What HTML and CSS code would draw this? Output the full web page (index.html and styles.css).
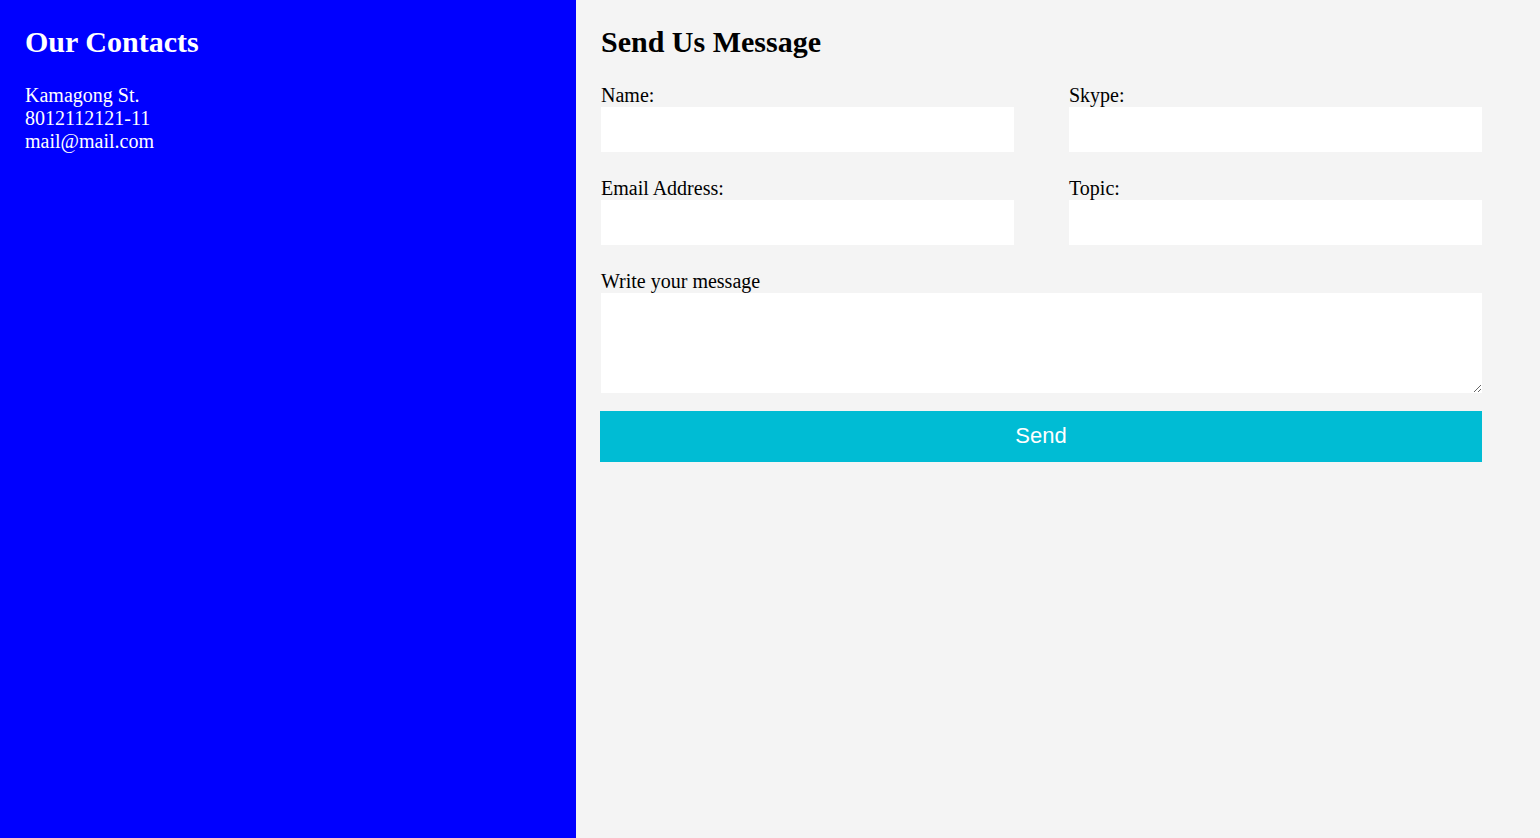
FILE: index.html
```html
<!DOCTYPE html>
<html lang="en">
<head>
<meta charset="utf-8">
<title>Contact</title>
<link rel="stylesheet" href="styles.css">
</head>
<body>
<div class="page">
  <aside class="contacts">
    <h2 class="title">Our Contacts</h2>
    <p class="info">Kamagong St.<br>8012112121-11<br>mail@mail.com</p>
  </aside>
  <main class="message">
    <h2 class="title">Send Us Message</h2>
    <form class="form">
      <div class="grid">
        <div class="field">
          <label class="label" for="name">Name:</label>
          <input class="input" id="name" type="text">
        </div>
        <div class="field">
          <label class="label" for="skype">Skype:</label>
          <input class="input" id="skype" type="text">
        </div>
        <div class="field">
          <label class="label" for="email">Email Address:</label>
          <input class="input" id="email" type="text">
        </div>
        <div class="field">
          <label class="label" for="topic">Topic:</label>
          <input class="input" id="topic" type="text">
        </div>
        <div class="field wide">
          <label class="label" for="msg">Write your message</label>
          <textarea class="textarea" id="msg"></textarea>
        </div>
      </div>
      <button class="send" type="button">Send</button>
    </form>
  </main>
</div>
</body>
</html>
```
FILE: styles.css
```css
html, body {
  margin: 0;
  height: 100%;
}
body {
  font-family: "Liberation Serif", "Times New Roman", serif;
  font-size: 20px;
  color: #000;
}
.page {
  display: flex;
  height: 100%;
}
.contacts {
  width: 576px;
  flex: none;
  box-sizing: border-box;
  background: #0000ff;
  color: #ffffff;
  padding: 25px;
}
.message {
  flex: 1;
  background: #f4f4f4;
  padding: 25px 24px;
}
.title {
  margin: 0 0 25px;
  font-size: 30px;
  font-weight: bold;
  line-height: 34px;
  color: #000;
}
.message .title {
  padding-left: 1px;
}
.contacts .title {
  color: #ffffff;
}
.info {
  margin: 0;
  line-height: 23px;
}
.form {
  width: 882px;
}
.grid {
  display: grid;
  grid-template-columns: 413px 413px;
  column-gap: 55px;
  row-gap: 25px;
  padding-left: 1px;
}
.field {
  display: flex;
  flex-direction: column;
}
.wide {
  grid-column: 1 / 3;
}
.label {
  line-height: 23px;
  color: #000;
}
.input, .textarea {
  display: block;
  box-sizing: border-box;
  width: 100%;
  border: none;
  background: #ffffff;
  margin: 0;
  padding: 4px 8px;
  font-family: inherit;
  font-size: 18px;
  outline: none;
}
.input {
  height: 45px;
}
.textarea {
  height: 100px;
}
.send {
  display: block;
  width: 882px;
  height: 51px;
  margin-top: 18px;
  padding: 0 0 2px;
  border: none;
  background: #00bcd4;
  color: #ffffff;
  font-family: "Liberation Sans", Arial, sans-serif;
  font-size: 22px;
  cursor: pointer;
}
```
